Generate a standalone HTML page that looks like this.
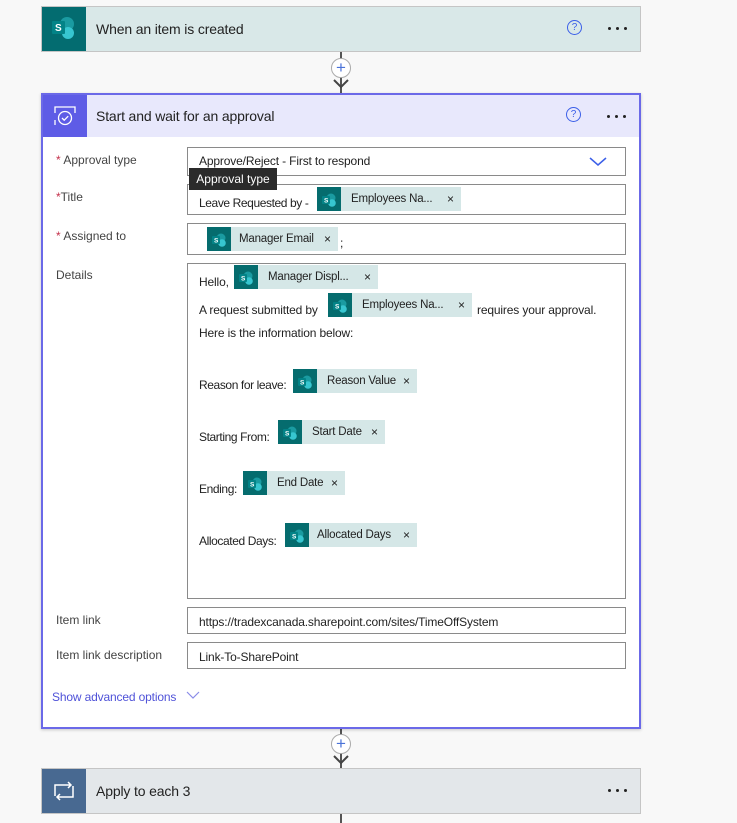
<!DOCTYPE html><html><head><style>
body{margin:0;width:737px;height:822px;background:#f8f8f8;font-family:"Liberation Sans",sans-serif;position:relative;overflow:hidden;font-size:12px;color:#222}
.a{position:absolute}
.tok{position:absolute;height:24px;background:#d5e7e7;font-size:11.5px;color:#222;line-height:24px;white-space:nowrap}
.tok .ic{position:absolute;left:0;top:0;width:24px;height:24px;background:#056c6e}
.tok .ic svg{position:absolute;left:4px;top:5px}
.tok .t{position:absolute;left:34px;letter-spacing:-0.2px}
.tok .x{position:absolute;right:7px;font-size:12px}
.inp{position:absolute;left:187px;width:437px;border:1px solid #8a8a8a;background:#fff}
.lbl{position:absolute;left:56px;font-size:12px;color:#444}
.lbl b{color:#c4314b;font-weight:normal}
.txt{position:absolute;font-size:12px;white-space:nowrap;letter-spacing:-0.15px}
.dots{position:absolute;width:20px;height:4px}
.dots i{position:absolute;top:0;width:3px;height:3px;background:#222;border-radius:50%}
</style></head><body>
<svg width="0" height="0" style="position:absolute"><defs><g id="sp"><circle cx="10" cy="6" r="4.5" fill="#1a9ba1"/><circle cx="11" cy="11" r="3.8" fill="#37c6d0"/><rect x="1" y="4" width="8" height="8" rx="1" fill="#038387"/><text x="3" y="10.5" font-size="6.5" fill="#fff" font-family="Liberation Sans" font-weight="bold">S</text></g></defs></svg>
<div class="a" style="left:340px;top:51px;width:2px;height:42px;background:#555"></div>
<div class="a" style="left:340px;top:727px;width:2px;height:42px;background:#555"></div>
<div class="a" style="left:340px;top:813px;width:2px;height:10px;background:#555"></div>
<div class="a" style="left:331px;top:58px;width:18px;height:18px;border-radius:50%;border:1px solid #aaa;background:#fff;color:#4a72d8;font-size:17px;line-height:17px;text-align:center">+</div>
<svg class="a" style="left:333px;top:78px" width="16" height="12"><path d="M1 2l7 7 7-7" stroke="#444" stroke-width="2" fill="none"/></svg>
<div class="a" style="left:331px;top:734px;width:18px;height:18px;border-radius:50%;border:1px solid #aaa;background:#fff;color:#4a72d8;font-size:17px;line-height:17px;text-align:center">+</div>
<svg class="a" style="left:333px;top:754px" width="16" height="12"><path d="M1 2l7 7 7-7" stroke="#444" stroke-width="2" fill="none"/></svg>

<div class="a" style="left:41px;top:6px;width:598px;height:44px;background:#d9e8e8;border:1px solid #c5c5c5"></div>
<div class="a" style="left:42px;top:7px;width:44px;height:44px;background:#036c70"></div>
<svg class="a" style="left:50px;top:15px" width="28" height="28"><circle cx="17" cy="9" r="7" fill="#1a9ba1"/><circle cx="18" cy="18" r="6" fill="#37c6d0"/><rect x="2" y="6" width="13" height="13" rx="1" fill="#038387"/><text x="5" y="16" font-size="10" fill="#fff" font-family="Liberation Sans" font-weight="bold">S</text></svg>
<div class="txt" style="left:96px;top:21px;font-size:14px">When an item is created</div>
<div class="a" style="left:567px;top:20px;width:13px;height:13px;border:1px solid #3b5fe8;border-radius:50%;color:#3b5fe8;font-size:10px;text-align:center;line-height:13px">?</div>
<div class="dots" style="left:608px;top:27px"><i style="left:0"></i><i style="left:8px"></i><i style="left:16px"></i></div>

<div class="a" style="left:41px;top:93px;width:596px;height:632px;background:#fff;border:2px solid #6b69e8;box-shadow:0 1px 3px rgba(0,0,0,.2)"></div>
<div class="a" style="left:43px;top:95px;width:596px;height:42px;background:#e8e8fc"></div>
<div class="a" style="left:43px;top:95px;width:44px;height:42px;background:#5e5ce6"></div>
<svg class="a" style="left:50px;top:101px" width="30" height="30"><path d="M5 12V6h20v6M5 19v5" stroke="#fff" stroke-width="1.3" fill="none"/><circle cx="15" cy="17" r="6.5" stroke="#fff" stroke-width="1.3" fill="none"/><path d="M12 17l2.2 2.2 4-4" stroke="#fff" stroke-width="1.3" fill="none"/></svg>
<div class="txt" style="left:96px;top:108px;font-size:14px">Start and wait for an approval</div>
<div class="a" style="left:566px;top:107px;width:13px;height:13px;border:1px solid #3b5fe8;border-radius:50%;color:#3b5fe8;font-size:10px;text-align:center;line-height:13px">?</div>
<div class="dots" style="left:607px;top:115px"><i style="left:0"></i><i style="left:8px"></i><i style="left:16px"></i></div>

<div class="lbl" style="top:153px"><b>*</b> Approval type</div>
<div class="lbl" style="top:190px"><b>*</b>Title</div>
<div class="lbl" style="top:229px"><b>*</b> Assigned to</div>
<div class="lbl" style="top:268px">Details</div>
<div class="lbl" style="top:613px">Item link</div>
<div class="lbl" style="top:648px">Item link description</div>

<div class="inp" style="top:147px;height:27px"></div>
<div class="txt" style="left:199px;top:154px">Approve/Reject - First to respond</div>
<svg class="a" style="left:589px;top:156px" width="18" height="12"><path d="M1 2l8 7 8-7" stroke="#3b5fe8" stroke-width="1.5" fill="none"/></svg>

<div class="inp" style="top:184px;height:29px"></div>
<div class="txt" style="left:199px;top:196px;letter-spacing:-0.4px">Leave Requested by -</div>

<div class="inp" style="top:223px;height:30px"></div>
<div class="txt" style="left:340px;top:236px">;</div>

<div class="inp" style="top:263px;height:334px"></div>
<div class="txt" style="left:199px;top:275px">Hello,</div>
<div class="txt" style="left:199px;top:303px">A request submitted by</div>
<div class="txt" style="left:477px;top:303px">requires your approval.</div>
<div class="txt" style="left:199px;top:326px">Here is the information below:</div>
<div class="txt" style="left:199px;top:378px;letter-spacing:-0.4px">Reason for leave:</div>
<div class="txt" style="left:199px;top:430px;letter-spacing:-0.4px">Starting From:</div>
<div class="txt" style="left:199px;top:482px;letter-spacing:-0.4px">Ending:</div>
<div class="txt" style="left:199px;top:534px;letter-spacing:-0.4px">Allocated Days:</div>

<div class="inp" style="top:607px;height:25px"></div>
<div class="txt" style="left:199px;top:615px">https://tradexcanada.sharepoint.com/sites/TimeOffSystem</div>
<div class="inp" style="top:642px;height:25px"></div>
<div class="txt" style="left:199px;top:650px">Link-To-SharePoint</div>

<div class="txt" style="left:52px;top:690px;color:#4f52d8">Show advanced options</div>
<svg class="a" style="left:186px;top:691px" width="14" height="9"><path d="M1 1l6 6 6-6" stroke="#8a8ce8" stroke-width="1.2" fill="none"/></svg>

<div class="tok" style="left:317px;top:187px;width:144px"><div class="ic"><svg width="16" height="15"><use href="#sp"/></svg></div><span class="t">Employees Na...</span><span class="x">×</span></div>
<div class="tok" style="left:207px;top:227px;width:131px"><div class="ic"><svg width="16" height="15"><use href="#sp"/></svg></div><span class="t" style="left:32px">Manager Email</span><span class="x">×</span></div>
<div class="tok" style="left:234px;top:265px;width:144px"><div class="ic"><svg width="16" height="15"><use href="#sp"/></svg></div><span class="t">Manager Displ...</span><span class="x">×</span></div>
<div class="tok" style="left:328px;top:293px;width:144px"><div class="ic"><svg width="16" height="15"><use href="#sp"/></svg></div><span class="t">Employees Na...</span><span class="x">×</span></div>
<div class="tok" style="left:293px;top:369px;width:124px"><div class="ic"><svg width="16" height="15"><use href="#sp"/></svg></div><span class="t">Reason Value</span><span class="x">×</span></div>
<div class="tok" style="left:278px;top:420px;width:107px"><div class="ic"><svg width="16" height="15"><use href="#sp"/></svg></div><span class="t">Start Date</span><span class="x">×</span></div>
<div class="tok" style="left:243px;top:471px;width:102px"><div class="ic"><svg width="16" height="15"><use href="#sp"/></svg></div><span class="t">End Date</span><span class="x">×</span></div>
<div class="tok" style="left:285px;top:523px;width:132px"><div class="ic"><svg width="16" height="15"><use href="#sp"/></svg></div><span class="t" style="left:32px">Allocated Days</span><span class="x">×</span></div>

<div class="a" style="left:189px;top:168px;width:88px;height:22px;background:#2b2b2b;color:#fff;font-size:12px;line-height:22px;text-align:center">Approval type</div>

<div class="a" style="left:41px;top:768px;width:598px;height:44px;background:#e3e7ea;border:1px solid #c5c5c5"></div>
<div class="a" style="left:42px;top:769px;width:44px;height:44px;background:#486991"></div>
<svg class="a" style="left:52px;top:780px" width="24" height="22"><path d="M3 16V5h16M16 2l3 3-3 3M21 6v11H5M8 20l-3-3 3-3" stroke="#fff" stroke-width="1.5" fill="none"/></svg>
<div class="txt" style="left:96px;top:783px;font-size:14px">Apply to each 3</div>
<div class="dots" style="left:608px;top:789px"><i style="left:0"></i><i style="left:8px"></i><i style="left:16px"></i></div>
</body></html>
